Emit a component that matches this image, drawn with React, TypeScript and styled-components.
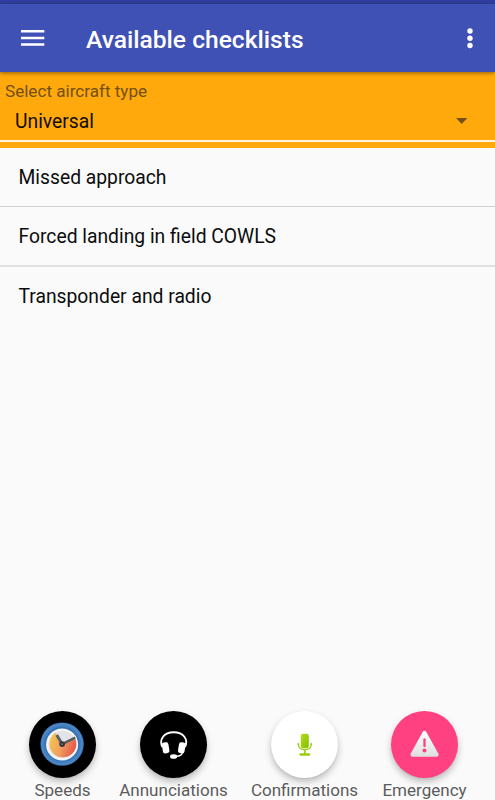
import React from "react";
import styled, { createGlobalStyle } from "styled-components";

const GlobalStyle = createGlobalStyle`
  *, *::before, *::after { box-sizing: border-box; }
  body { margin: 0; background: #fafafa; font-family: Roboto, "Liberation Sans", sans-serif; }
  button { font: inherit; }
`;

const Screen = styled.div`
  display: flex;
  flex-direction: column;
  width: 100%;
  height: 100vh;
  overflow: hidden;
  background: #fafafa;
`;

const StatusBar = styled.div`
  flex: none;
  height: 4px;
  background: #303f9f;
`;

const AppBar = styled.header`
  flex: none;
  display: flex;
  align-items: center;
  height: 68px;
  padding: 0 15px 0 21px;
  background: #3f51b5;
  color: #fff;
  box-shadow: 0 1px 4px rgba(0, 0, 0, 0.45);
  z-index: 1;
`;

const IconButton = styled.button`
  display: flex;
  padding: 0;
  border: 0;
  background: none;
  color: inherit;
`;

const Title = styled.h1`
  flex: 1;
  margin: 3px 0 0 41px;
  font-size: 24.6px;
  font-weight: 500;
  line-height: 32px;
  white-space: nowrap;
`;

const AircraftPicker = styled.section`
  flex: none;
  display: flex;
  flex-direction: column;
  height: 76px;
  padding-bottom: 6px;
  background: #ffa90d;
`;

const PickerLabel = styled.label`
  padding: 8px 5px 0;
  font-size: 17.1px;
  line-height: 22px;
  color: #735014;
`;

const PickerValue = styled.div`
  flex: 1;
  display: flex;
  align-items: center;
  justify-content: space-between;
  padding: 1px 27px 0 15px;
  border-bottom: 2px solid #fff5e0;
  font-size: 19.3px;
  color: #120c00;
`;

const Checklists = styled.ul`
  flex: 1;
  margin: 0;
  padding: 0;
  list-style: none;
`;

const ChecklistRow = styled.li`
  display: flex;
  align-items: center;
  height: 60px;
  padding: 1px 18.5px 0;
  border-bottom: 2px solid #e0e0e0;
  font-size: 19.3px;
  color: #0c0c0c;
  &:first-child { height: 59px; border-bottom: 1px solid #d0d0d0; }
  &:last-child { height: 59px; padding-top: 0; border-bottom: 0; }
`;

const Actions = styled.nav`
  flex: none;
  display: flex;
  justify-content: space-between;
  height: 89px;
  padding: 0 28px 0 29px;
`;

const Action = styled.div<{ $width: number }>`
  display: flex;
  flex-direction: column;
  align-items: center;
  width: ${(p) => p.$width}px;
`;

const RoundButton = styled.button<{ $color: string }>`
  flex: none;
  display: grid;
  place-items: center;
  width: 67px;
  height: 67px;
  padding: 0;
  border: 0;
  border-radius: 50%;
  background: ${(p) => p.$color};
  box-shadow: 0 4px 7px rgba(0, 0, 0, 0.24), 0 1px 2px rgba(0, 0, 0, 0.06);
`;

const ActionLabel = styled.span`
  margin-top: 2px;
  font-size: 17.05px;
  line-height: 21px;
  white-space: nowrap;
  color: #5c5c5c;
`;

const MenuIcon = () => (
  <svg width="24" height="20" viewBox="0 0 24 20" fill="#fff">
    <path d="M0 2h23.3v2.5H0zM0 8.7h23.3v2.5H0zM0 15.3h23.3v2.5H0z" />
  </svg>
);

const MoreIcon = () => (
  <svg width="20" height="24" viewBox="0 0 20 24" fill="#fff">
    <circle cx="10" cy="5" r="2.7" />
    <circle cx="10" cy="12.3" r="2.7" />
    <circle cx="10" cy="19.5" r="2.7" />
  </svg>
);

const CaretIcon = () => (
  <svg width="12" height="8" viewBox="0 0 12 8" fill="#735014">
    <path d="M.1 0h11.2L5.7 6z" />
  </svg>
);

const SpeedIcon = () => (
  <svg width="45" height="45" viewBox="0 0 46 46">
    <defs>
      <linearGradient id="dial" x1="0" x2="1" y1=".35" y2=".65">
        <stop offset="0" stopColor="#f6c44b" />
        <stop offset=".45" stopColor="#efa060" />
        <stop offset="1" stopColor="#e55347" />
      </linearGradient>
      <radialGradient id="rim">
        <stop offset=".65" stopColor="#23588f" />
        <stop offset=".82" stopColor="#3c7cc0" />
        <stop offset=".93" stopColor="#5088c4" />
        <stop offset="1" stopColor="#326fab" />
      </radialGradient>
    </defs>
    <circle cx="22.6" cy="22.6" r="22.2" fill="url(#rim)" />
    <circle cx="22.6" cy="23" r="16.4" fill="#f4f5f8" />
    <circle cx="22.6" cy="23" r="14" fill="#e3e4e7" />
    <path d="M22.6 22.6L15.8 11A13.7 13.7 0 1 0 36 17z" fill="url(#dial)" />
    <path d="M22.6 22.6L17.1 13.4" stroke="#57606a" strokeWidth="3" />
    <path d="M22.6 22.6L36 16" stroke="#555c62" strokeWidth="2.6" />
    <circle cx="22.6" cy="22.6" r="2.9" fill="#30363d" />
    <circle cx="22.6" cy="22.6" r="1" fill="#8b7660" />
  </svg>
);

const HeadsetIcon = () => (
  <svg width="30" height="30" viewBox="0 0 30 30" fill="none" stroke="#fff">
    <path d="M3.4 17C-.3 9.2 5 2.3 14.7 2.3S29.7 9.2 26 17" strokeWidth="1.9" />
    <rect x="3.4" y="12.3" width="6.6" height="11" rx="2.3" fill="#fff" stroke="none" transform="rotate(-9 6.7 18)" />
    <rect x="19.4" y="12.3" width="6.6" height="11" rx="2.3" fill="#fff" stroke="none" transform="rotate(9 22.7 18)" />
    <path d="M23.3 22q.4 4-6.6 4.4" strokeWidth="1.4" />
    <ellipse cx="14.6" cy="26.5" rx="3.6" ry="2.3" fill="#fff" stroke="none" />
  </svg>
);

const MicIcon = () => (
  <svg width="16" height="24" viewBox="0 0 16 24">
    <defs>
      <linearGradient id="mic" x2="1" y2="1">
        <stop stopColor="#b7dc1c" />
        <stop offset="1" stopColor="#81c000" />
      </linearGradient>
    </defs>
    <rect x="3.8" y=".8" width="8" height="14.4" rx="2.3" fill="url(#mic)" />
    <g stroke="#9fce18" fill="none" strokeLinecap="round">
      <path d="M1.3 11.2Q1.6 16.7 7.8 16.7t6.5-5.5" strokeWidth="1.3" />
      <path d="M1.3 11v.3M14.3 11v.3M7.8 17v4" strokeWidth="1.8" />
    </g>
    <rect x="2.4" y="20.3" width="10.8" height="2.5" rx="1.2" fill="#98ce05" />
  </svg>
);

const WarningIcon = () => (
  <svg width="30" height="30" viewBox="0 0 30 30">
    <defs>
      <linearGradient id="warning" x2="0" y2="1">
        <stop stopColor="#fff" />
        <stop offset="1" stopColor="#dedede" />
      </linearGradient>
    </defs>
    <path d="M12.5 2.2q2-2.7 4 0L28.3 23.4q1.2 3.1-2 3.3H2.8q-3.2-.2-2-3.3z" fill="url(#warning)" />
    <path d="M14.5 9.3v6.8" stroke="#ff4081" strokeWidth="2.3" strokeLinecap="round" />
    <circle cx="14.5" cy="20.6" r="2" fill="#ff4081" />
  </svg>
);

const checklists = ["Missed approach", "Forced landing in field COWLS", "Transponder and radio"];

const actions = [
  { label: "Speeds", color: "#000", width: 67, icon: <SpeedIcon /> },
  { label: "Annunciations", color: "#000", width: 107, icon: <HeadsetIcon /> },
  { label: "Confirmations", color: "#fff", width: 107, icon: <MicIcon /> },
  { label: "Emergency", color: "#ff4081", width: 85, icon: <WarningIcon /> },
];

export default function App() {
  return (
    <Screen>
      <GlobalStyle />
      <StatusBar />
      <AppBar>
        <IconButton aria-label="Open menu"><MenuIcon /></IconButton>
        <Title>Available checklists</Title>
        <IconButton aria-label="More options"><MoreIcon /></IconButton>
      </AppBar>
      <AircraftPicker>
        <PickerLabel>Select aircraft type</PickerLabel>
        <PickerValue>
          Universal
          <CaretIcon />
        </PickerValue>
      </AircraftPicker>
      <Checklists>
        {checklists.map((name) => (
          <ChecklistRow key={name}>{name}</ChecklistRow>
        ))}
      </Checklists>
      <Actions>
        {actions.map((a) => (
          <Action key={a.label} $width={a.width}>
            <RoundButton $color={a.color} aria-label={a.label}>{a.icon}</RoundButton>
            <ActionLabel>{a.label}</ActionLabel>
          </Action>
        ))}
      </Actions>
    </Screen>
  );
}
